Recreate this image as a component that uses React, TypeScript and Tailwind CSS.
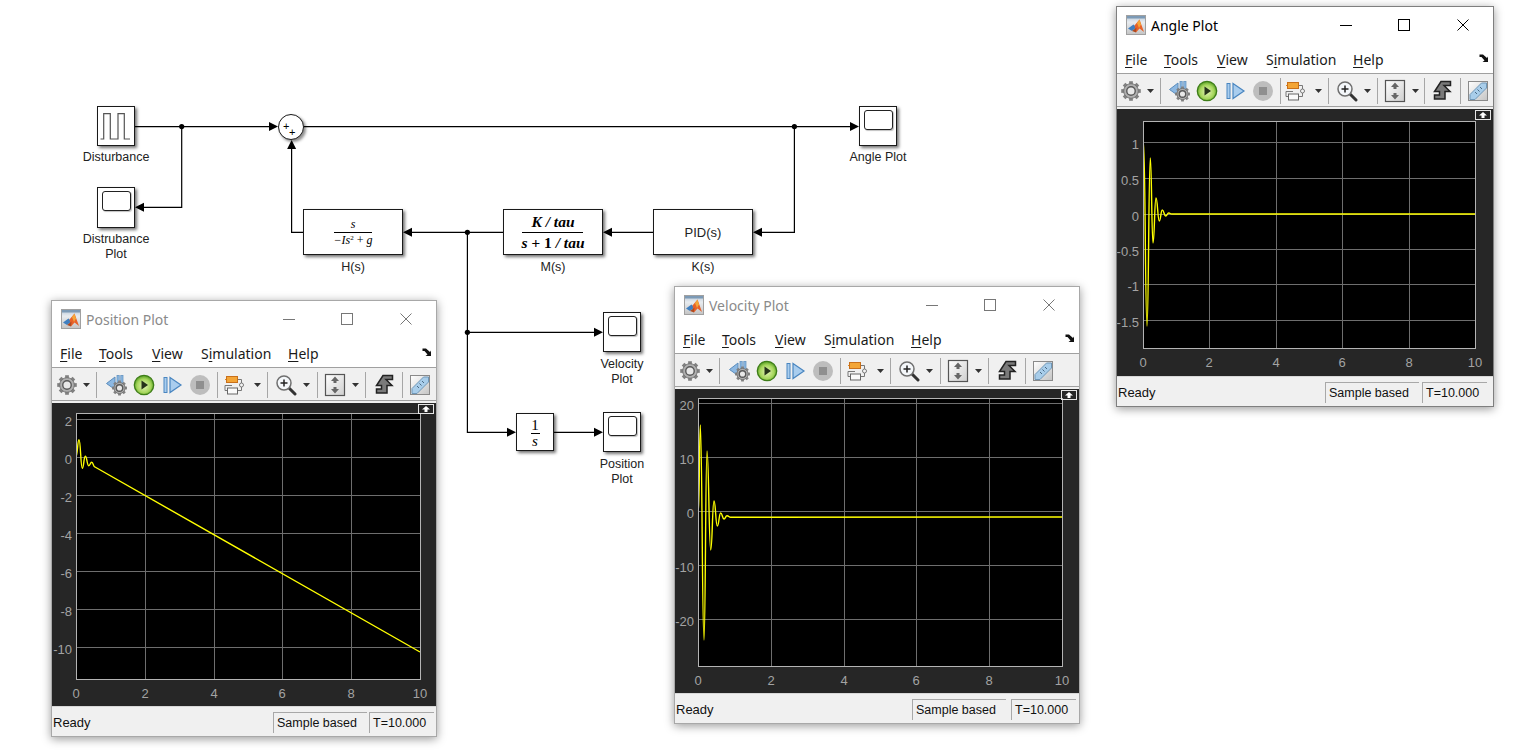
import React from 'react';

type Pt = [number, number];

const wave = (pts: Pt[]) =>
    pts.reduce((d, [x, y], i) => {
        if (i === 0) return `M${x} ${y}`;
        const [px, py] = pts[i - 1];
        const mx = (px + x) / 2;
        return `${d} C${mx} ${py} ${mx} ${y} ${x} ${y}`;
    }, '');

const Gear: React.FC<{ cx: number; cy: number; r: number }> = ({ cx, cy, r }) => (
    <g>
        {[0, 45, 90, 135, 180, 225, 270, 315].map(a => (
            <rect key={a} x={cx - r * 0.22} y={cy - r * 1.15} width={r * 0.44} height={r * 0.5} fill="#808080" transform={`rotate(${a} ${cx} ${cy})`} />
        ))}
        <circle cx={cx} cy={cy} r={r * 0.86} fill="#b0b0b0" stroke="#767676" strokeWidth="1" />
        <circle cx={cx} cy={cy} r={r * 0.5} fill="#e8e8e8" stroke="#5a5a5a" strokeWidth="1.4" />
    </g>
);

const GearIcon = () => (
    <svg width="20" height="20" viewBox="0 0 20 20"><Gear cx={10} cy={10} r={8.5} /></svg>
);

const RewindIcon = () => (
    <svg width="24" height="22" viewBox="-1 0 24 22">
        <path d="M1.5 9.5 L10 3 V15.5 Z" fill="#8cb8e2" stroke="#5a8cbc" />
        <rect x="12" y="1.5" width="2.2" height="9" fill="#8cb8e2" stroke="#5a8cbc" strokeWidth="0.7" />
        <rect x="15.8" y="1.5" width="2.2" height="9" fill="#8cb8e2" stroke="#5a8cbc" strokeWidth="0.7" />
        <Gear cx={14.5} cy={14} r={6.5} />
    </svg>
);

const PlayIcon = () => (
    <svg width="22" height="22" viewBox="0 0 22 22">
        <defs>
            <radialGradient id="playFill" cx="50%" cy="55%" r="55%">
                <stop offset="0%" stopColor="#e6f5b8" />
                <stop offset="65%" stopColor="#a6d65c" />
                <stop offset="100%" stopColor="#4f9a1f" />
            </radialGradient>
        </defs>
        <circle cx="11" cy="11" r="9.7" fill="url(#playFill)" stroke="#3e7d18" strokeWidth="1.3" />
        <path d="M8.5 6.5 L15 11 L8.5 15.5 Z" fill="#26331a" />
    </svg>
);

const StepIcon = () => (
    <svg width="22" height="22" viewBox="0 0 22 22">
        <rect x="3" y="3.5" width="3" height="15" fill="#a9cdee" stroke="#4a86c0" strokeWidth="1" />
        <path d="M9 3.5 L20 11 L9 18.5 Z" fill="#a9cdee" stroke="#4a86c0" strokeWidth="1.2" />
    </svg>
);

const StopIcon = () => (
    <svg width="22" height="22" viewBox="0 0 22 22">
        <circle cx="11" cy="11" r="10" fill="#bdbdbd" />
        <rect x="7" y="7" width="8" height="8" fill="#8f8f8f" />
    </svg>
);

const BlockIcon = () => (
    <svg width="22" height="22" viewBox="0 0 22 22">
        <path d="M13 5.5 H17.5 V9 M17.5 13 V16.5 H14 M3.5 16.5 H1 V11.5 H8" fill="none" stroke="#777" strokeWidth="1" />
        <path d="M1 5.5 H3" stroke="#e08a1e" strokeWidth="1.2" />
        <rect x="2.5" y="2.5" width="11" height="6" fill="#f3a536" stroke="#c9701a" />
        <rect x="3.5" y="14" width="10" height="6" fill="#fafafa" stroke="#666" />
        <circle cx="17.5" cy="11" r="2" fill="#f4f4f4" stroke="#777" />
    </svg>
);

const ZoomIcon = () => (
    <svg width="22" height="22" viewBox="0 0 22 22">
        <path d="M13.5 13.5 L20 20" stroke="#333" strokeWidth="3" strokeLinecap="round" />
        <circle cx="9" cy="9" r="7" fill="#f4f7fa" stroke="#6f6f6f" strokeWidth="1.5" />
        <path d="M5.5 9 H12.5 M9 5.5 V12.5" stroke="#222" strokeWidth="1.5" />
    </svg>
);

const FitIcon = () => (
    <svg width="22" height="24" viewBox="0 0 22 24">
        <defs>
            <linearGradient id="fitFill" x1="0" y1="0" x2="1" y2="1">
                <stop offset="0%" stopColor="#ffffff" />
                <stop offset="100%" stopColor="#cfcfcf" />
            </linearGradient>
        </defs>
        <rect x="1.5" y="1.5" width="19" height="21" fill="url(#fitFill)" stroke="#555" strokeWidth="1.2" />
        <path d="M11 3.5 L15 8 H12.5 V10 H9.5 V8 H7 Z M11 20.5 L15 16 H12.5 V14 H9.5 V16 H7 Z" fill="#666" />
    </svg>
);

const StepsIcon = () => (
    <svg width="22" height="22" viewBox="0 0 22 22">
        <path d="M10 1.5 H19.5 V5.5 H13 L19 11.5 H14 V19 H3.5 V15 H8.5 V11.5 H3.5 Z" fill="#7a7a7a" stroke="#222" strokeWidth="1.5" strokeLinejoin="miter" />
    </svg>
);

const RulerIcon = () => (
    <svg width="22" height="22" viewBox="0 0 22 22">
        <defs>
            <linearGradient id="rulerBox" x1="0" y1="0" x2="1" y2="1">
                <stop offset="0%" stopColor="#ffffff" />
                <stop offset="100%" stopColor="#c4c4c4" />
            </linearGradient>
        </defs>
        <rect x="1.5" y="1.5" width="19" height="19" fill="url(#rulerBox)" stroke="#8a8a8a" />
        <path d="M3 14.5 L14.5 3 H19.5 V8 L8 19.5 H3 Z" fill="#a8cdea" stroke="#6f97b8" />
        <path d="M8 12 L10 14 M10.5 9.5 L12.5 11.5 M13 7 L15 9" stroke="#4a6a85" strokeWidth="1" />
    </svg>
);

const Caret = () => (
    <svg width="7" height="4" viewBox="0 0 7 4"><path d="M0 0 H7 L3.5 4 Z" fill="#333" /></svg>
);

const Tool: React.FC<{ className: string; children: React.ReactNode }> = ({ className, children }) => (
    <div className={`flex h-full shrink-0 items-center justify-center ${className}`}>{children}</div>
);

const Sep: React.FC<{ className: string }> = ({ className }) => (
    <div className={`h-[26px] w-px shrink-0 bg-[#a6a6a6] ${className}`} />
);

// the two larger scopes have slightly wider toolbar gaps than the Angle one
const Toolbar: React.FC<{ wide: boolean }> = ({ wide }) => (
    <div className={`flex h-[33px] items-center overflow-hidden border-b border-[#a0a0a0] bg-[#f0f0f0] pt-[2px] ${wide ? 'pl-[3px]' : 'pl-[2px]'}`}>
        <Tool className="w-[24px]"><GearIcon /></Tool>
        <Tool className="w-[15px]"><Caret /></Tool>
        <Sep className={wide ? 'ml-[2px] mr-[5px]' : 'ml-[2px] mr-[4px]'} />
        <Tool className="w-[28px]"><RewindIcon /></Tool>
        <Tool className="w-[28px]"><PlayIcon /></Tool>
        <Tool className="w-[28px]"><StepIcon /></Tool>
        <Tool className="w-[28px]"><StopIcon /></Tool>
        <Sep className={wide ? 'ml-[3px] mr-[3px]' : 'ml-[3px] mr-px'} />
        <Tool className="w-[28px]"><BlockIcon /></Tool>
        <Tool className="ml-px w-[15px]"><Caret /></Tool>
        <Sep className={wide ? 'ml-[2px] mr-[4px]' : 'ml-[2px] mr-[4px]'} />
        <Tool className="w-[28px]"><ZoomIcon /></Tool>
        <Tool className="w-[13px]"><Caret /></Tool>
        <Sep className={wide ? 'ml-[4px] mr-[3px]' : 'ml-[3px] mr-[3px]'} />
        <Tool className="w-[28px]"><FitIcon /></Tool>
        <Tool className="w-[13px]"><Caret /></Tool>
        <Sep className={wide ? 'ml-[3px] mr-[4px]' : 'ml-[2px] mr-[3px]'} />
        <Tool className="w-[28px]"><StepsIcon /></Tool>
        <Sep className="ml-[4px] mr-[4px]" />
        <Tool className="w-[26px]"><RulerIcon /></Tool>
    </div>
);

const MatlabLogo = () => (
    <svg width="20" height="20" viewBox="0 0 20 20">
        <defs>
            <linearGradient id="logoBg" x1="0" y1="0" x2="0" y2="1">
                <stop offset="0%" stopColor="#b4c4d4" />
                <stop offset="35%" stopColor="#e8ecf0" />
                <stop offset="100%" stopColor="#c4c4c4" />
            </linearGradient>
        </defs>
        <rect x="0.5" y="0.5" width="19" height="19" fill="url(#logoBg)" stroke="#a0a0a0" />
        <rect x="1" y="1" width="18" height="2.5" fill="#7c9ab6" />
        <path d="M2 13.5 L7.5 9.5 L10.5 12.5 L6 16 Z" fill="#3f7fc0" />
        <path d="M8.5 10.5 L13.5 4.5 L18 17 L13.5 13.5 L10 17.5 Z" fill="#e8622a" />
        <path d="M13.5 4.5 L15 9.5 L13 13 L11 8 Z" fill="#f5a63a" />
        <path d="M6 16 L10.5 12.5 L10 17.5 Z" fill="#b04a20" />
    </svg>
);

const WindowControls: React.FC<{ color: string }> = ({ color }) => (
    <div className="ml-auto flex h-full">
        <div className="flex w-[58px] items-center justify-center">
            <svg width="12" height="12" viewBox="0 0 12 12"><path d="M0 6.5 H12" stroke={color} /></svg>
        </div>
        <div className="flex w-[58px] items-center justify-center">
            <svg width="12" height="12" viewBox="0 0 12 12"><rect x="0.5" y="0.5" width="11" height="11" fill="none" stroke={color} /></svg>
        </div>
        <div className="mr-px flex w-[59px] items-center justify-center">
            <svg width="12" height="12" viewBox="0 0 12 12"><path d="M0.5 0.5 L11.5 11.5 M11.5 0.5 L0.5 11.5" stroke={color} /></svg>
        </div>
    </div>
);

const menuItems = [
    { pre: '', key: 'F', post: 'ile', width: 'w-[39px]' },
    { pre: '', key: 'T', post: 'ools', width: 'w-[53px]' },
    { pre: '', key: 'V', post: 'iew', width: 'w-[49px]' },
    { pre: 'S', key: 'i', post: 'mulation', width: 'w-[87px]' },
    { pre: '', key: 'H', post: 'elp', width: 'w-[40px]' },
];

const MenuBar = () => (
    <div className="flex h-[29px] items-center border-b border-[#a0a0a0] bg-white pl-[8px] font-['Noto_Sans',sans-serif] text-[14px] text-[#1a1a1a]">
        {menuItems.map(m => (
            <div key={m.post} className={m.width}>
                {m.pre}<span className="underline underline-offset-2">{m.key}</span>{m.post}
            </div>
        ))}
        <svg className="ml-auto mr-[3px] mb-[2px]" width="11" height="9" viewBox="0 0 11 9">
            <path d="M0.5 0.5 H4 L8 4 L9 2.5 V8 H3.5 L5.5 6.5 L2.5 3 H0.5 Z" fill="#111" />
        </svg>
    </div>
);

const UndockButton = () => (
    <div className="absolute right-[2px] top-px flex h-[10px] w-[16px] items-center justify-center border border-[#e6e6e6]">
        <svg width="10" height="6" viewBox="0 0 10 6"><path d="M5 0 L9 3.5 H6.5 V6 H3.5 V3.5 H1 Z" fill="#fff" /></svg>
    </div>
);

interface ScopeProps {
    className: string;
    title: string;
    active?: boolean;
    panelGap: string;
    endGap: string;
    originX: number;
    originY: number;
    box: { l: number; t: number; r: number; b: number };
    xTicks: { x: number; label: string }[];
    yTicks: { y: number; label: string }[];
    trace: string;
}

const Scope: React.FC<ScopeProps> = ({ className, title, active, panelGap, endGap, originX, originY, box, xTicks, yTicks, trace }) => (
    <div className={`absolute flex flex-col border bg-white shadow-[0_2px_9px_rgba(0,0,0,0.4)] ${active ? 'border-[#7f7f7f]' : 'border-[#a8a8a8]'} ${className}`}>
        <div className="flex h-[38px] shrink-0 items-center pb-[2px] pl-[9px]">
            <MatlabLogo />
            <span className={`ml-[5px] font-['Noto_Sans',sans-serif] text-[14px] ${active ? 'text-black' : 'text-[#8a8a8a]'}`}>{title}</span>
            <WindowControls color={active ? '#000' : '#777'} />
        </div>
        <MenuBar />
        <Toolbar wide={!active} />
        <div className="h-[2px] shrink-0 bg-[#f0f0f0]" />
        <div className="relative min-h-0 flex-1 bg-[#262626]">
            <svg className="block h-full w-full font-['Liberation_Sans',Arial,sans-serif]">
                <g transform={`translate(${-originX} ${-originY})`}>
                    <rect x={box.l} y={box.t} width={box.r - box.l} height={box.b - box.t} fill="#000" />
                    {xTicks.map(t => (
                        <g key={t.label}>
                            <path d={`M${t.x + 0.5} ${box.t} V${box.b}`} stroke="#6e6e6e" />
                            <text x={t.x} y={box.b + 19} textAnchor="middle" fontSize="13" fill="#a3a3a3">{t.label}</text>
                        </g>
                    ))}
                    {yTicks.map(t => (
                        <g key={t.label}>
                            <path d={`M${box.l} ${t.y + 0.5} H${box.r}`} stroke="#6e6e6e" />
                            <text x={box.l - 4} y={t.y + 7} textAnchor="end" fontSize="13" fill="#a3a3a3">{t.label}</text>
                        </g>
                    ))}
                    <path d={trace} fill="none" stroke="#ffff00" strokeWidth="1.4" strokeLinejoin="round" />
                    <rect x={box.l + 0.5} y={box.t + 0.5} width={box.r - box.l} height={box.b - box.t} fill="none" stroke="#b4b4b4" />
                </g>
            </svg>
            <UndockButton />
        </div>
        <div className="flex h-[30px] shrink-0 items-center border-t border-[#d8d8d8] bg-[#f0f0f0] pl-px pt-[2px] font-['Liberation_Sans',Arial,sans-serif] text-[13px] text-[#111]">
            <span>Ready</span>
            <div className={`ml-auto flex h-[21px] w-[94px] items-center border-l border-t border-[#a8a8a8] pl-[3px] text-[12.5px] ${panelGap}`}>Sample based</div>
            <div className={`flex h-[21px] w-[65px] items-center border-l border-t border-[#a8a8a8] pl-[3px] text-[12.5px] ${endGap}`}>T=10.000</div>
        </div>
    </div>
);

const xs = (start: number, step: number) =>
    ['0', '2', '4', '6', '8', '10'].map((label, i) => ({ label, x: Math.round(start + step * i) }));

const angleTrace = wave([
    [1143.5, 143], [1147, 327], [1150.3, 159], [1153, 244], [1156, 199], [1159.3, 222],
    [1162.3, 211], [1165.7, 217], [1168.7, 214], [1171.7, 215],
]) + ' L1475 215';

const velocityTrace = wave([
    [698.5, 512], [700.3, 426], [704, 641], [707, 452], [710.7, 551], [714, 502], [717.3, 527],
    [720.7, 514], [724, 520], [727, 516.7], [730.7, 518.3],
]) + ' L1062 518';

const positionTrace = wave([
    [76, 457.5], [79, 440.7], [82.3, 469.3], [85.3, 457.3], [88.7, 466.7], [91.7, 463.3], [95, 468],
]) + ' L420 653';

const Block: React.FC<{ className: string; size: string; label?: string; labelGap?: string; children?: React.ReactNode }> = ({ className, size, label, labelGap = 'mt-[4px]', children }) => (
    <div className={`absolute flex flex-col items-center ${className}`}>
        <div className={`flex shrink-0 flex-col items-center justify-center border border-[#1a1a1a] bg-white shadow-[2px_2px_3px_rgba(0,0,0,0.55)] ${size}`}>
            {children}
        </div>
        {label && (
            <div className={`whitespace-pre text-center font-['Liberation_Sans',Arial,sans-serif] text-[12.5px] leading-[15px] text-[#222] ${labelGap}`}>{label}</div>
        )}
    </div>
);

const ScopeGlyph = () => (
    <div className="mb-[13px] h-[20px] w-[29px] rounded-[3px] border-[1.5px] border-[#222] bg-white shadow-[1px_1px_1px_rgba(0,0,0,0.25)]" />
);

const PulseGlyph = () => (
    <svg width="36" height="38" viewBox="0 0 36 38">
        <path d="M2.5 32 H5.7 V6.7 H12.3 V32 H20 V6.7 H26.3 V32 H32" fill="none" stroke="#555" strokeWidth="1.2" />
    </svg>
);

const Arrow: React.FC<{ x: number; y: number; dir: 'left' | 'right' | 'up' }> = ({ x, y, dir }) => {
    const p = dir === 'right'
        ? `${x},${y} ${x - 9},${y - 4.5} ${x - 9},${y + 4.5}`
        : dir === 'left'
            ? `${x},${y} ${x + 9},${y - 4.5} ${x + 9},${y + 4.5}`
            : `${x},${y} ${x - 4.5},${y + 9} ${x + 4.5},${y + 9}`;
    return <polygon points={p} fill="#000" />;
};

const Wires = () => (
    <svg className="absolute inset-0 h-full w-full">
        <g fill="none" stroke="#000" strokeWidth="1.2">
            <path d="M135 126.6 H270" />
            <path d="M181.7 126.6 V207.3 H144" />
            <path d="M304 126.6 H851" />
            <path d="M794.4 126.6 V232.3 H762" />
            <path d="M653 232.3 H612" />
            <path d="M503 232.3 H412" />
            <path d="M303 232.3 H291.6 V149" />
            <path d="M467.4 232.3 V432.3 H507" />
            <path d="M467.4 332.3 H595" />
            <path d="M554 432.3 H595" />
        </g>
        <Arrow x={278} y={126.6} dir="right" />
        <Arrow x={135} y={207.3} dir="left" />
        <Arrow x={859} y={126.6} dir="right" />
        <Arrow x={753} y={232.3} dir="left" />
        <Arrow x={603} y={232.3} dir="left" />
        <Arrow x={403} y={232.3} dir="left" />
        <Arrow x={291.6} y={140} dir="up" />
        <Arrow x={603} y={332.3} dir="right" />
        <Arrow x={516} y={432.3} dir="right" />
        <Arrow x={603} y={432.3} dir="right" />
        <circle cx="181.7" cy="126.6" r="2.6" />
        <circle cx="794.4" cy="126.6" r="2.6" />
        <circle cx="467.4" cy="232.3" r="2.6" />
        <circle cx="467.4" cy="332.3" r="2.6" />
    </svg>
);

const Diagram = () => (
    <>
        <Wires />
        <Block className="left-[97px] top-[106px] w-[38px]" size="h-[40px] w-[38px]" label="Disturbance"><PulseGlyph /></Block>
        <Block className="left-[97px] top-[187px] w-[38px]" size="h-[41px] w-[38px]" label={'Distrubance\nPlot'}><ScopeGlyph /></Block>
        <Block className="left-[859px] top-[106px] w-[38px]" size="h-[40px] w-[38px]" label="Angle Plot"><ScopeGlyph /></Block>
        <Block className="left-[603px] top-[312px] w-[38px]" size="h-[40px] w-[38px]" label={'Velocity\nPlot'} labelGap="mt-[5px]"><ScopeGlyph /></Block>
        <Block className="left-[603px] top-[412px] w-[38px]" size="h-[40px] w-[38px]" label={'Position\nPlot'} labelGap="mt-[5px]"><ScopeGlyph /></Block>

        <div className="absolute left-[278px] top-[114px] h-[26px] w-[26px] rounded-full border border-[#1a1a1a] bg-white font-['Liberation_Sans',Arial,sans-serif] text-[11px] leading-none text-black shadow-[2px_2px_3px_rgba(0,0,0,0.45)]">
            <span className="absolute left-[4px] top-[6px]">+</span>
            <span className="absolute left-[10px] top-[12px]">+</span>
        </div>

        <Block className="left-[303px] top-[209px] w-[100px]" size="h-[46px] w-[100px]" label="H(s)" labelGap="mt-[5px]">
            <div className="flex flex-col items-center font-['Liberation_Serif',serif] text-[12px] italic leading-[13px] text-black">
                <span className="w-[38px] border-b border-black pb-px text-center">s</span>
                <span className="whitespace-nowrap pt-px">−Is<sup className="text-[7px] not-italic">2</sup>{'\u2009'}+{'\u2009'}g</span>
            </div>
        </Block>
        <Block className="left-[503px] top-[209px] w-[100px]" size="h-[46px] w-[100px]" label="M(s)" labelGap="mt-[5px]">
            <div className="flex flex-col items-center font-['Liberation_Serif',serif] text-[15.5px] font-bold italic leading-[20px] text-black">
                <span className="w-[61px] border-b border-black text-center">K / tau</span>
                <span className="whitespace-nowrap">s + <span className="not-italic">1</span> / tau</span>
            </div>
        </Block>
        <Block className="left-[653px] top-[209px] w-[100px]" size="h-[46px] w-[100px]" label="K(s)" labelGap="mt-[5px]">
            <span className="pt-px font-['Liberation_Sans',Arial,sans-serif] text-[13px] text-[#222]">PID(s)</span>
        </Block>
        <Block className="left-[516px] top-[413px] w-[38px]" size="h-[38px] w-[38px]">
            <div className="mt-[2px] flex flex-col items-center font-['Liberation_Serif',serif] text-[15px] leading-[15px] text-black">
                <span className="w-[9px] border-b border-black text-center">1</span>
                <span className="italic">s</span>
            </div>
        </Block>
    </>
);

const App = () => (
    <div className="relative h-[751px] w-[1516px] overflow-hidden bg-white">
        <Diagram />
        <Scope
            className="left-[51px] top-[300px] h-[437px] w-[386px]"
            title="Position Plot"
            panelGap="mr-[2px]"
            endGap="mr-[2px]"
            originX={52}
            originY={404}
            box={{ l: 76, t: 414, r: 420, b: 680 }}
            xTicks={xs(76, 68.8)}
            yTicks={[
                { y: 420, label: '2' }, { y: 458, label: '0' }, { y: 496, label: '-2' },
                { y: 534, label: '-4' }, { y: 572, label: '-6' }, { y: 610, label: '-8' }, { y: 648, label: '-10' },
            ]}
            trace={positionTrace}
        />
        <Scope
            className="left-[674px] top-[286px] h-[438px] w-[406px]"
            title="Velocity Plot"
            panelGap="mr-[5px]"
            endGap="mr-[3px]"
            originX={675}
            originY={390}
            box={{ l: 698, t: 399, r: 1062, b: 667 }}
            xTicks={xs(698, 72.8)}
            yTicks={[
                { y: 404, label: '20' }, { y: 458, label: '10' }, { y: 512, label: '0' },
                { y: 566, label: '-10' }, { y: 620, label: '-20' },
            ]}
            trace={velocityTrace}
        />
        <Scope
            className="left-[1116px] top-[6px] h-[401px] w-[378px]"
            title="Angle Plot"
            active
            panelGap="mr-[3px]"
            endGap="mr-[6px]"
            originX={1117}
            originY={110}
            box={{ l: 1143, t: 122, r: 1475, b: 349 }}
            xTicks={xs(1143, 66.4)}
            yTicks={[
                { y: 143, label: '1' }, { y: 179, label: '0.5' }, { y: 215, label: '0' },
                { y: 250, label: '-0.5' }, { y: 285, label: '-1' }, { y: 321, label: '-1.5' },
            ]}
            trace={angleTrace}
        />
    </div>
);

export default App;
